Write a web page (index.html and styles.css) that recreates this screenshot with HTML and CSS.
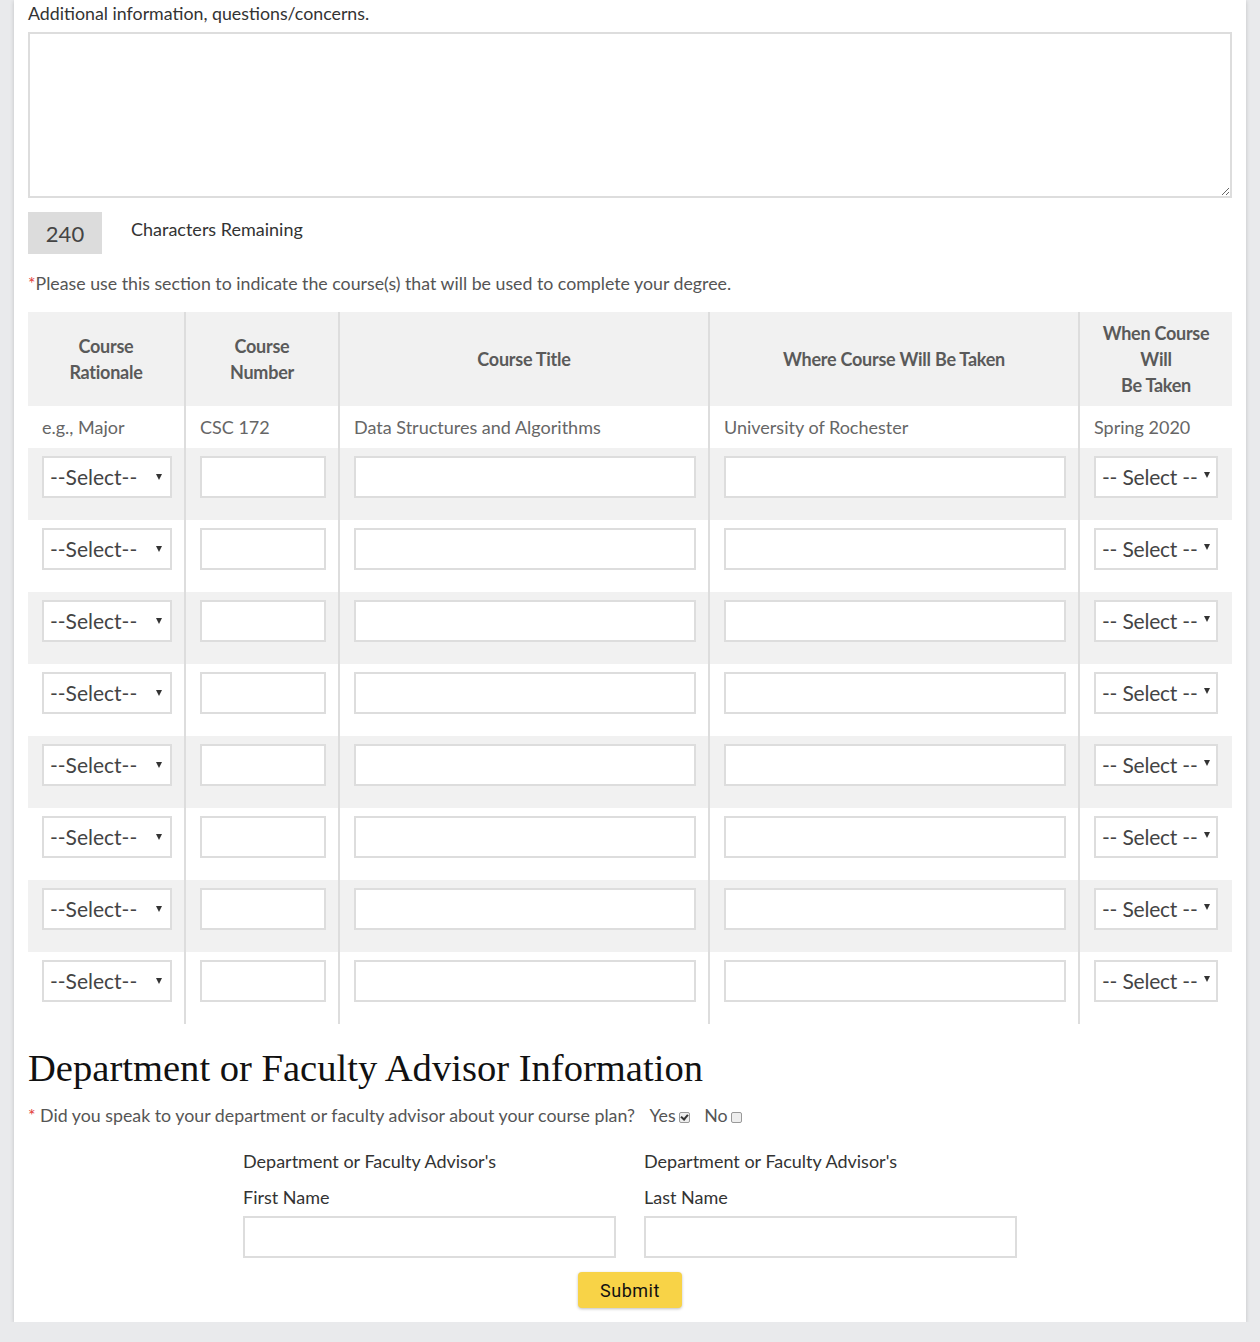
FILE: index.html
```html
<!DOCTYPE html>
<html>
<head>
<meta charset="utf-8">
<link rel="stylesheet" href="styles.css">
</head>
<body>
<div class="card">
  <label class="top-label">Additional information, questions/concerns.</label>
  <textarea class="notes"></textarea>
  <div class="counter-row">
    <span class="counter">240</span>
    <span class="counter-text">Characters Remaining</span>
  </div>
  <p class="note"><span class="req">*</span>Please use this section to indicate the course(s) that will be used to complete your degree.</p>

  <table class="courses">
    <colgroup>
      <col class="c1"><col class="c2"><col class="c3"><col class="c4"><col class="c5">
    </colgroup>
    <thead>
      <tr class="head">
        <th>Course<br>Rationale</th>
        <th>Course<br>Number</th>
        <th>Course Title</th>
        <th>Where Course Will Be Taken</th>
        <th>When Course<br>Will<br>Be Taken</th>
      </tr>
    </thead>
    <tbody>
      <tr class="example">
        <td>e.g., Major</td>
        <td>CSC 172</td>
        <td>Data Structures and Algorithms</td>
        <td>University of Rochester</td>
        <td>Spring 2020</td>
      </tr>
      <tr class="row odd"><td><div class="sel sel1">--Select--</div></td><td><div class="inp"></div></td><td><div class="inp"></div></td><td><div class="inp"></div></td><td><div class="sel sel2">-- Select --</div></td></tr>
      <tr class="row"><td><div class="sel sel1">--Select--</div></td><td><div class="inp"></div></td><td><div class="inp"></div></td><td><div class="inp"></div></td><td><div class="sel sel2">-- Select --</div></td></tr>
      <tr class="row odd"><td><div class="sel sel1">--Select--</div></td><td><div class="inp"></div></td><td><div class="inp"></div></td><td><div class="inp"></div></td><td><div class="sel sel2">-- Select --</div></td></tr>
      <tr class="row"><td><div class="sel sel1">--Select--</div></td><td><div class="inp"></div></td><td><div class="inp"></div></td><td><div class="inp"></div></td><td><div class="sel sel2">-- Select --</div></td></tr>
      <tr class="row odd"><td><div class="sel sel1">--Select--</div></td><td><div class="inp"></div></td><td><div class="inp"></div></td><td><div class="inp"></div></td><td><div class="sel sel2">-- Select --</div></td></tr>
      <tr class="row"><td><div class="sel sel1">--Select--</div></td><td><div class="inp"></div></td><td><div class="inp"></div></td><td><div class="inp"></div></td><td><div class="sel sel2">-- Select --</div></td></tr>
      <tr class="row odd"><td><div class="sel sel1">--Select--</div></td><td><div class="inp"></div></td><td><div class="inp"></div></td><td><div class="inp"></div></td><td><div class="sel sel2">-- Select --</div></td></tr>
      <tr class="row"><td><div class="sel sel1">--Select--</div></td><td><div class="inp"></div></td><td><div class="inp"></div></td><td><div class="inp"></div></td><td><div class="sel sel2">-- Select --</div></td></tr>
    </tbody>
  </table>

  <h2 class="section-title">Department or Faculty Advisor Information</h2>
  <p class="question"><span class="req">*</span> Did you speak to your department or faculty advisor about your course plan?
    <span class="opt">Yes<span class="box checked"></span></span>
    <span class="opt">No<span class="box"></span></span>
  </p>

  <div class="names">
    <div class="field">
      <div class="flabel">Department or Faculty Advisor's</div>
      <div class="flabel">First Name</div>
      <div class="finp"></div>
    </div>
    <div class="field">
      <div class="flabel">Department or Faculty Advisor's</div>
      <div class="flabel">Last Name</div>
      <div class="finp"></div>
    </div>
  </div>
  <div class="actions"><button class="submit">Submit</button></div>
</div>
</body>
</html>
```
FILE: styles.css
```css
html, body {
  margin: 0;
  padding: 0;
}
body {
  background: #e9eaec;
  font-family: Lato, "Open Sans", sans-serif;
  color: #555;
}
.card {
  background: #fff;
  margin: 0 14px;
  padding: 1px 14px 14px;
  box-shadow: 0 1px 4px rgba(0,0,0,0.18);
}
.top-label {
  display: block;
  font-size: 17.8px;
  line-height: 24px;
  color: #333;
  margin-bottom: 7px;
}
.notes {
  display: block;
  box-sizing: border-box;
  width: 100%;
  height: 166px;
  border: 2px solid #ddd;
  margin: 0;
  padding: 6px;
  font-family: inherit;
  outline: none;
}
.counter-row {
  display: flex;
  align-items: center;
  margin-top: 14px;
}
.counter {
  width: 74px;
  height: 42px;
  background: #dcdcdc;
  color: #444;
  font-size: 22px;
  display: flex;
  align-items: center;
  justify-content: center;
  padding-top: 1px;
  box-sizing: border-box;
}
.counter-text {
  margin-left: 29px;
  font-size: 18px;
  color: #333;
  margin-top: -8px;
}
.req { color: #e2403c; }
.note {
  margin: 17px 0 17px;
  font-size: 17.75px;
  line-height: 24px;
  color: #555;
}
.courses {
  width: 100%;
  border-collapse: collapse;
  table-layout: fixed;
}
.c1 { width: 157px; }
.c2 { width: 154px; }
.c3 { width: 370px; }
.c4 { width: 370px; }
.c5 { width: 153px; }
.courses th, .courses td {
  border-left: 2px solid #ddd;
  padding: 0 12px 0 14px;
}
.courses th:first-child, .courses td:first-child { border-left: none; }
.head {
  background: #f1f1f1;
  height: 94px;
}
.head th {
  font-size: 18px;
  font-weight: 700;
  line-height: 26px;
  color: #5a5a5a;
  text-align: center;
  letter-spacing: -0.25px;
  padding: 0 10px;
}
.example td {
  height: 42px;
  font-size: 18px;
  color: #666;
  vertical-align: middle;
  padding-top: 0;
}
.row td {
  height: 72px;
  box-sizing: border-box;
  vertical-align: top;
  padding-top: 8px;
}
.row td:last-child { padding-right: 14px; }
.row.odd { background: #f1f1f1; }
.inp, .sel {
  box-sizing: border-box;
  height: 42px;
  border: 2px solid #ddd;
  background: #fff;
  width: 100%;
}
.sel {
  position: relative;
  font-size: 21px;
  color: #444;
  line-height: 38px;
  padding-left: 6px;
  white-space: nowrap;
  overflow: hidden;
}
.sel1 { width: 130px; }
.sel::after {
  content: "";
  position: absolute;
  top: 16px;
  border-left: 3px solid transparent;
  border-right: 3px solid transparent;
  border-top: 6px solid #333;
}
.sel1::after { right: 8px; }
.sel2 { padding-left: 6px; letter-spacing: -0.2px; }
.sel2::after { right: 6px; top: 14px; }
.section-title {
  margin: 20px 0 0;
  font-family: "Liberation Serif", "DejaVu Serif", serif;
  font-weight: 400;
  font-size: 38.6px;
  line-height: 48px;
  color: #111;
}
.question {
  margin: 11px 0 0;
  font-size: 17.8px;
  line-height: 24px;
  color: #555;
}
.opt {
  margin-left: 10px;
  color: #555;
}
.box {
  display: inline-block;
  width: 9px;
  height: 9px;
  border: 1px solid #999;
  border-radius: 2px;
  background: #eee;
  margin-left: 3px;
  vertical-align: -1px;
  position: relative;
}
.box.checked::after {
  content: "";
  position: absolute;
  left: 2px;
  top: 0px;
  width: 3px;
  height: 5px;
  border-right: 2px solid #333;
  border-bottom: 2px solid #333;
  transform: rotate(40deg);
}
.names {
  display: grid;
  grid-template-columns: 373px 373px;
  column-gap: 28px;
  justify-content: center;
  margin-top: 22px;
}
.flabel {
  font-size: 18px;
  line-height: 24px;
  color: #333;
  margin-bottom: 12px;
}
.flabel + .flabel { margin-bottom: 7px; }
.finp {
  height: 42px;
  box-sizing: border-box;
  border: 2px solid #ddd;
}
.actions {
  display: flex;
  justify-content: center;
  margin-top: 14px;
}
.submit {
  width: 104px;
  height: 36px;
  background: #f8d347;
  border: none;
  border-radius: 4px;
  font-family: Roboto, Arial, sans-serif;
  font-size: 18px;
  letter-spacing: 0.5px;
  color: #111;
  box-shadow: 0 1px 3px rgba(0,0,0,0.25);
}
```
